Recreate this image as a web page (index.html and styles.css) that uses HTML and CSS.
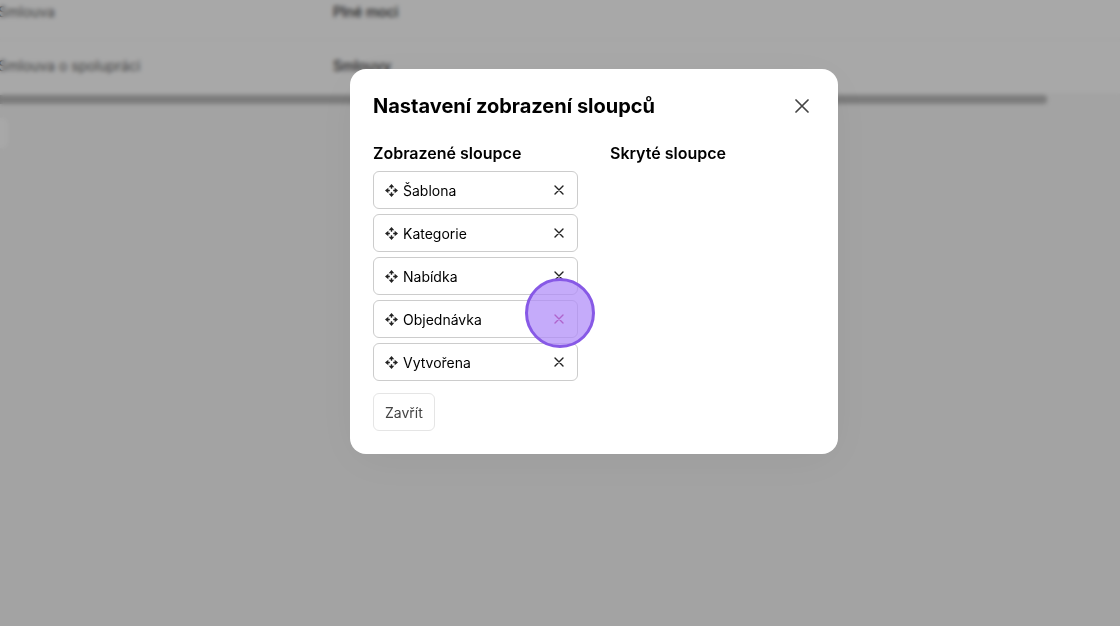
FILE: index.html
```
<!DOCTYPE html>
<html lang="cs">
<head>
    <meta charset="UTF-8">
    <meta name="viewport" content="width=device-width, initial-scale=1.0">
    <title>Nastavení zobrazení sloupců</title>
    <link rel="stylesheet" href="styles.css">
</head>
<body>
<svg class="sprite" aria-hidden="true">
    <symbol id="icon-move" viewBox="0 0 14 14">
        <path d="M7 0 10 3.600H4zM7 14 4 10.400h6zM0 7l3.600-3v6zM14 7l-3.600 3V4z" fill="currentColor"/>
        <path d="M7 2.500v2.700M7 8.800v2.700M2.500 7h2.700M8.800 7h2.700" stroke="currentColor" stroke-width="1.500"/>
    </symbol>
    <symbol id="icon-close" viewBox="0 0 14 14">
        <path d="M1 1l12 12M13 1 1 13" fill="none" stroke="currentColor" stroke-width="1.700" stroke-linecap="round"/>
    </symbol>
    <symbol id="icon-remove" viewBox="0 0 10 10">
        <path d="M1 1l8 8M9 1 1 9" fill="none" stroke="currentColor" stroke-width="1.400" stroke-linecap="round"/>
    </symbol>
</svg>

<main class="page">
    <table class="documents">
        <tr>
            <td>Smlouva</td>
            <td class="category">Plné moci</td>
        </tr>
        <tr>
            <td>Smlouva o spolupráci</td>
            <td class="category">Smlouvy</td>
        </tr>
    </table>
    <div class="scrollbar"></div>
    <div class="pager">
        <div class="pager-item"></div>
    </div>
</main>

<div class="overlay">
    <div class="modal" role="dialog" aria-labelledby="modal-title">
        <div class="modal-header">
            <h1 id="modal-title">Nastavení zobrazení sloupců</h1>
            <button class="modal-close" aria-label="Zavřít okno"><svg><use href="#icon-close"/></svg></button>
        </div>
        <div class="columns">
            <section>
                <h2>Zobrazené sloupce</h2>
                <ul class="column-list">
                    <li class="column-item">
                        <svg class="move"><use href="#icon-move"/></svg>
                        <span>Šablona</span>
                        <button class="remove" aria-label="Skrýt Šablona"><svg><use href="#icon-remove"/></svg></button>
                    </li>
                    <li class="column-item">
                        <svg class="move"><use href="#icon-move"/></svg>
                        <span>Kategorie</span>
                        <button class="remove" aria-label="Skrýt Kategorie"><svg><use href="#icon-remove"/></svg></button>
                    </li>
                    <li class="column-item">
                        <svg class="move"><use href="#icon-move"/></svg>
                        <span>Nabídka</span>
                        <button class="remove" aria-label="Skrýt Nabídka"><svg><use href="#icon-remove"/></svg></button>
                    </li>
                    <li class="column-item">
                        <svg class="move"><use href="#icon-move"/></svg>
                        <span>Objednávka</span>
                        <button class="remove active" aria-label="Skrýt Objednávka"><svg><use href="#icon-remove"/></svg></button>
                        <div class="click-marker"></div>
                    </li>
                    <li class="column-item">
                        <svg class="move"><use href="#icon-move"/></svg>
                        <span>Vytvořena</span>
                        <button class="remove" aria-label="Skrýt Vytvořena"><svg><use href="#icon-remove"/></svg></button>
                    </li>
                </ul>
            </section>
            <section>
                <h2>Skryté sloupce</h2>
            </section>
        </div>
        <button class="close-button">Zavřít</button>
    </div>
</div>
</body>
</html>
```

FILE: styles.css
```
* {
    box-sizing: border-box;
}

body {
    margin: 0;
    min-height: 100vh;
    font-family: Inter, sans-serif;
    font-size: 14px;
    color: #000;
    background-color: #f7f7f7;
    overflow: hidden;
}

button {
    font-family: inherit;
    background: none;
    border: none;
    padding: 0;
    cursor: pointer;
}

.sprite {
    display: none;
}

/* Stránka pod oknem */
.page {
    margin-left: -2px;
}

.documents {
    width: 100%;
    border-collapse: collapse;
    background-color: #fff;
    margin-top: -15px;
}

.documents td {
    height: 54px;
    padding: 0 0 1px;
    width: 335px;
    color: #666;
    border-bottom: 1px solid #f9f9f9;
}

.documents .category {
    width: auto;
    font-weight: 500;
    color: #333;
}

.scrollbar {
    height: 9px;
    margin: 1px 73px 0 0;
    border-radius: 0 4px 4px 0;
    background-color: #bcbcbc;
}

.pager {
    padding: 14px 0 10px;
}

.pager-item {
    width: 10px;
    height: 30px;
    border-radius: 0 6px 6px 0;
    background-color: #fff;
}

.overlay {
    position: absolute;
    inset: 0;
    padding: 69px 0 0 68px;
    background-color: rgba(0, 0, 0, 0.34);
    backdrop-filter: blur(2px);
}

/* Okno */
.modal {
    max-width: 488px;
    margin: 0 auto;
    padding: 23px;
    border-radius: 16px;
    background-color: #fff;
    box-shadow: 0 8px 48px rgba(0, 0, 0, 0.05);
}

.modal-header {
    display: flex;
    align-items: center;
    justify-content: space-between;
    margin-bottom: 21px;
}

h1 {
    margin: 0;
    font-size: 20px;
    line-height: 28px;
    font-weight: 700;
}

h2 {
    margin: 0 0 6px;
    font-size: 16px;
    line-height: 24px;
    font-weight: 600;
}

.modal-close {
    display: flex;
    padding: 6px;
    color: #444;
}

.modal-close svg {
    width: 14px;
    height: 14px;
}

.columns {
    display: grid;
    grid-template-columns: 1fr 1fr;
    gap: 32px;
}

.column-list {
    list-style: none;
    margin: 0;
    padding: 0;
    display: flex;
    flex-direction: column;
    gap: 5px;
}

.column-item {
    position: relative;
    display: flex;
    align-items: center;
    gap: 5px;
    height: 38px;
    padding: 0 8px 0 11px;
    border: 1px solid #ccc;
    border-radius: 6px;
}

.move {
    width: 13px;
    height: 13px;
    color: #222;
}

.remove {
    display: flex;
    margin-left: auto;
    padding: 5px;
    color: #222;
}

.remove svg {
    width: 10px;
    height: 10px;
}

.remove.active {
    color: #b0005a;
}

/* Značka kliknutí */
.click-marker {
    position: absolute;
    top: -23px;
    right: -18px;
    z-index: 1;
    width: 70px;
    height: 70px;
    border: 3px solid #8759e6;
    border-radius: 50%;
    background-color: rgba(174, 138, 248, 0.72);
}

.close-button {
    height: 38px;
    margin-top: 12px;
    padding: 0 11px;
    display: block;
    border: 1px solid #e5e5e5;
    border-radius: 6px;
    font-size: 14px;
    color: #444;
}
```
